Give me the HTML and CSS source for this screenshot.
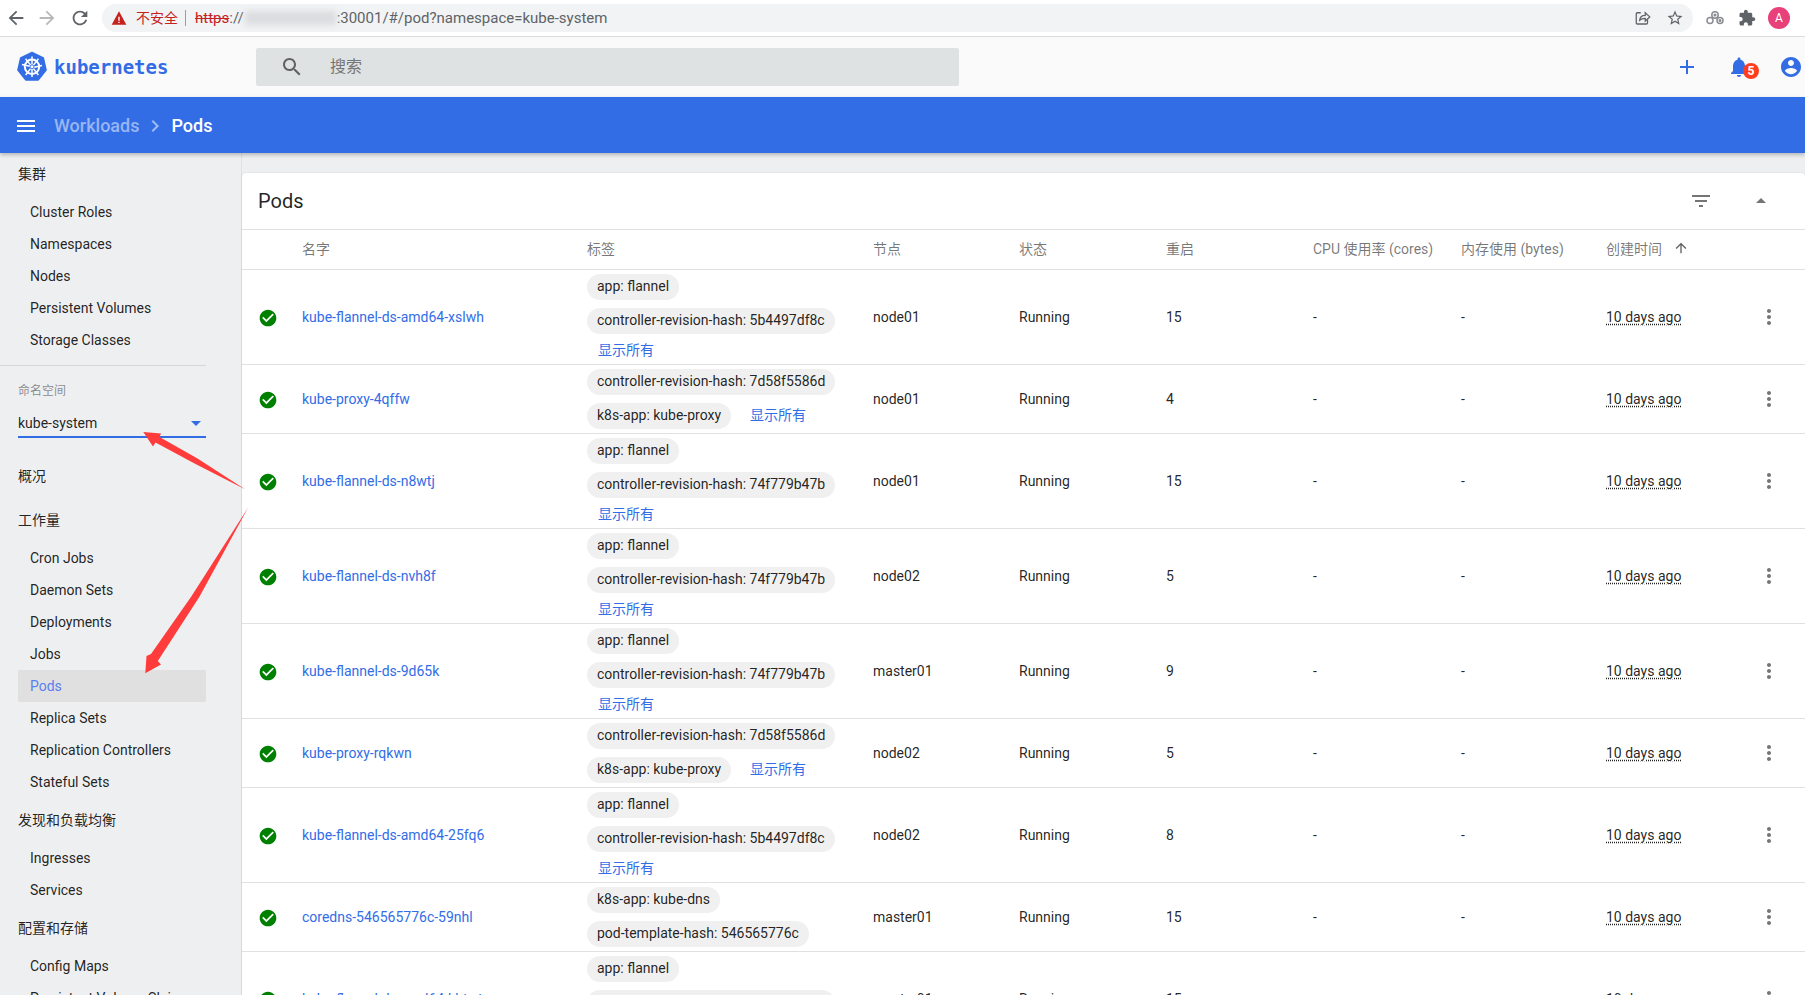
FILE: index.html
```html
<!DOCTYPE html>
<html lang="zh">
<head>
<meta charset="utf-8">
<title>Pods - Kubernetes Dashboard</title>
<link rel="stylesheet" href="styles.css">
</head>
<body>
<svg class="defs" width="0" height="0" aria-hidden="true">
  <symbol id="i-ok" viewBox="0 0 24 24"><circle cx="12" cy="12" r="6.5" fill="#fff"/><path d="M12 2C6.48 2 2 6.48 2 12s4.48 10 10 10 10-4.48 10-10S17.52 2 12 2zm-2 15l-5-5 1.41-1.41L10 14.17l7.59-7.59L19 8l-9 9z"/></symbol>
  <symbol id="i-more" viewBox="0 0 24 24"><path d="M12 8c1.1 0 2-.9 2-2s-.9-2-2-2-2 .9-2 2 .9 2 2 2zm0 2c-1.1 0-2 .9-2 2s.9 2 2 2 2-.9 2-2-.9-2-2-2zm0 6c-1.1 0-2 .9-2 2s.9 2 2 2 2-.9 2-2-.9-2-2-2z"/></symbol>
</svg>

<header class="browser">
  <svg class="b-nav" viewBox="0 0 24 24"><path d="M20 11H7.83l5.59-5.59L12 4l-8 8 8 8 1.41-1.41L7.83 13H20v-2z"/></svg>
  <svg class="b-nav b-off" viewBox="0 0 24 24"><path d="M12 4l-1.41 1.41L16.17 11H4v2h12.17l-5.58 5.59L12 20l8-8z"/></svg>
  <svg class="b-nav b-reload" viewBox="0 0 24 24"><path d="M17.65 6.35C16.2 4.9 14.21 4 12 4c-4.42 0-7.99 3.58-7.99 8s3.57 8 7.99 8c3.73 0 6.84-2.55 7.73-6h-2.08c-.82 2.33-3.04 4-5.65 4-3.31 0-6-2.69-6-6s2.69-6 6-6c1.66 0 3.14.69 4.22 1.78L13 11h7V4l-2.35 2.35z"/></svg>
  <div class="omni">
    <svg class="warn" viewBox="0 0 24 24"><path fill="#c5221f" d="M1 22h22L12 2 1 22z"/><path fill="#fff" d="M11 10h2v6h-2zM11 17.5h2v2h-2z"/></svg>
    <span class="insecure">不安全</span>
    <span class="sep"></span>
    <span class="url"><s class="scheme">https</s>://</span>
    <span class="blurred"></span>
    <span class="url">:30001/#/pod?namespace=kube-system</span>
    <span class="omni-space"></span>
    <svg class="o-ic" viewBox="0 0 24 24" fill="none" stroke="#5f6368" stroke-width="1.7"><path d="M9 5H4.5A1.5 1.5 0 0 0 3 6.500v12A1.500 1.500 0 0 0 4.500 20h12a1.500 1.500 0 0 0 1.500-1.500V14"/><path d="M7.500 15c.5-4 3.500-6.500 7.500-6.500V5l6 5.500-6 5.500v-3.500c-3 0-5.500.7-7.500 2.500z"/></svg>
    <svg class="o-ic star" viewBox="0 0 24 24"><path d="M22 9.240l-7.190-.62L12 2 9.190 8.630 2 9.240l5.460 4.730L5.820 21 12 17.270 18.180 21l-1.630-7.030L22 9.240zM12 15.400l-3.760 2.270 1-4.280-3.320-2.880 4.380-.38L12 6.100l1.710 4.040 4.380.38-3.320 2.880 1 4.280L12 15.400z"/></svg>
  </div>
  <svg class="b-ext" viewBox="0 0 20 16" fill="none" stroke="#8a8d91" stroke-width="1.500"><circle cx="5" cy="10.500" r="3"/><circle cx="10" cy="5" r="3.200"/><circle cx="15" cy="10.500" r="3"/><circle cx="10" cy="5" r=".8"/><circle cx="15" cy="10.500" r=".8"/></svg>
  <svg class="b-puzzle" viewBox="0 0 24 24"><path d="M20.500 11H19V7c0-1.100-.9-2-2-2h-4V3.500C13 2.120 11.880 1 10.500 1S8 2.120 8 3.500V5H4c-1.100 0-1.990.9-1.990 2v3.800H3.500c1.490 0 2.700 1.210 2.700 2.700s-1.210 2.700-2.700 2.700H2V20c0 1.100.9 2 2 2h3.800v-1.500c0-1.490 1.210-2.700 2.700-2.700 1.490 0 2.700 1.210 2.700 2.700V22H17c1.100 0 2-.9 2-2v-4h1.500c1.380 0 2.500-1.120 2.500-2.500S21.880 11 20.500 11z"/></svg>
  <span class="b-avatar">A</span>
</header>

<div class="toolbar">
  <div class="brand">
    <svg class="logo" viewBox="0 0 32 32">
      <path fill="#326de6" d="M16 1.500l11.300 5.400 2.800 12.200-7.800 9.800H9.700L1.900 19.100 4.700 6.900z" stroke="#326de6" stroke-width="1.500" stroke-linejoin="round"/>
      <g fill="none" stroke="#fff">
        <circle cx="16" cy="15.800" r="7.200" stroke-width="2"/>
        <path stroke-width="1.500" d="M16 5.500v8M16 18v8M6 13.600l7.800 1.700M18.200 16.300l7.800-1.700M9.600 24l5-6.400M17.400 17.600l5 6.400M9.600 7.800l5 6.300M17.400 14.100l5-6.300"/>
        <circle cx="16" cy="15.800" r="1.500" fill="#fff" stroke="none"/>
      </g>
    </svg>
    <span class="wordmark">kubernetes</span>
  </div>
  <div class="search">
    <svg class="search-ic" viewBox="0 0 24 24"><path d="M15.500 14h-.79l-.28-.27C15.410 12.590 16 11.110 16 9.500 16 5.910 13.090 3 9.500 3S3 5.910 3 9.500 5.910 16 9.500 16c1.610 0 3.090-.59 4.230-1.570l.27.28v.79l5 4.990L20.490 19l-4.990-5zm-6 0C7.010 14 5 11.990 5 9.500S7.010 5 9.500 5 14 7.010 14 9.500 11.990 14 9.500 14z"/></svg>
    <span>搜索</span>
  </div>
  <div class="tools">
    <svg class="tool add" viewBox="0 0 24 24"><path d="M19 13h-6v6h-2v-6H5v-2h6V5h2v6h6v2z"/></svg>
    <span class="bell">
      <svg class="tool" viewBox="0 0 24 24"><path d="M12 22c1.100 0 2-.9 2-2h-4c0 1.100.89 2 2 2zm6-6v-5c0-3.070-1.640-5.640-4.500-6.320V4c0-.83-.67-1.500-1.500-1.500s-1.500.67-1.500 1.500v.68C7.630 5.360 6 7.920 6 11v5l-2 2v1h16v-1l-2-2z"/></svg>
      <b class="badge">5</b>
    </span>
    <svg class="tool user" viewBox="0 0 24 24"><path d="M12 2C6.480 2 2 6.480 2 12s4.480 10 10 10 10-4.480 10-10S17.520 2 12 2zm0 3c1.660 0 3 1.340 3 3s-1.340 3-3 3-3-1.340-3-3 1.340-3 3-3zm0 14.200c-2.500 0-4.710-1.280-6-3.220.03-1.990 4-3.080 6-3.080 1.990 0 5.970 1.090 6 3.080-1.290 1.940-3.500 3.220-6 3.220z"/></svg>
  </div>
</div>

<div class="crumbs">
  <svg class="menu" viewBox="0 0 18 12"><path d="M0 0h18v2H0zM0 5h18v2H0zM0 10h18v2H0z"/></svg>
  <span class="crumb-dim">Workloads</span>
  <svg class="chev" viewBox="0 0 24 24"><path d="M10 6L8.590 7.410 13.170 12l-4.580 4.590L10 18l6-6z"/></svg>
  <span class="crumb-now">Pods</span>
</div>

<div class="body">
  <nav class="side">
    <div class="nav-title nav-first">集群</div>
    <a class="nav-item">Cluster Roles</a>
    <a class="nav-item">Namespaces</a>
    <a class="nav-item">Nodes</a>
    <a class="nav-item">Persistent Volumes</a>
    <a class="nav-item">Storage Classes</a>
    <div class="nav-rule"></div>
    <div class="ns">
      <div class="ns-label">命名空间</div>
      <div class="ns-select"><span>kube-system</span><i class="ns-caret"></i></div>
    </div>
    <div class="nav-title">概况</div>
    <div class="nav-title">工作量</div>
    <a class="nav-item">Cron Jobs</a>
    <a class="nav-item">Daemon Sets</a>
    <a class="nav-item">Deployments</a>
    <a class="nav-item">Jobs</a>
    <a class="nav-item nav-on">Pods</a>
    <a class="nav-item">Replica Sets</a>
    <a class="nav-item">Replication Controllers</a>
    <a class="nav-item">Stateful Sets</a>
    <div class="nav-title">发现和负载均衡</div>
    <a class="nav-item">Ingresses</a>
    <a class="nav-item">Services</a>
    <div class="nav-title">配置和存储</div>
    <a class="nav-item">Config Maps</a>
    <a class="nav-item">Persistent Volume Claims</a>
  </nav>

  <main class="main">
    <section class="card">
      <div class="card-head">
        <h1 class="card-title">Pods</h1>
        <svg class="head-ic filter" viewBox="0 0 24 24"><path d="M10 18h4v-2h-4v2zM3 6v2h18V6H3zm3 7h12v-2H6v2z"/></svg>
        <svg class="head-ic collapse" viewBox="0 0 24 24"><path d="M7 14l5-5 5 5z"/></svg>
      </div>
      <table class="pods">
        <colgroup>
          <col class="c-ic"><col class="c-name"><col class="c-label"><col class="c-node"><col class="c-state"><col class="c-rest"><col class="c-cpu"><col class="c-mem"><col class="c-age"><col class="c-act">
        </colgroup>
        <thead>
          <tr>
            <th></th><th>名字</th><th>标签</th><th>节点</th><th>状态</th><th>重启</th><th>CPU 使用率 (cores)</th><th>内存使用 (bytes)</th>
            <th><span class="sorted">创建时间<svg class="sort-ic" viewBox="0 0 24 24"><path d="M4 12l1.410 1.410L11 7.830V20h2V7.830l5.580 5.590L20 12l-8-8-8 8z"/></svg></span></th><th></th>
          </tr>
        </thead>
        <tbody>
          <tr>
            <td class="t-ic"><svg class="ok"><use href="#i-ok"/></svg></td>
            <td><a class="pod-link">kube-flannel-ds-amd64-xslwh</a></td>
            <td><div class="labels"><span class="chip">app: flannel</span><span class="chip">controller-revision-hash: 5b4497df8c</span><a class="show">显示所有</a></div></td>
            <td>node01</td><td>Running</td><td>15</td><td>-</td><td>-</td><td><span class="age">10 days ago</span></td>
            <td><svg class="more"><use href="#i-more"/></svg></td>
          </tr>
          <tr>
            <td class="t-ic"><svg class="ok"><use href="#i-ok"/></svg></td>
            <td><a class="pod-link">kube-proxy-4qffw</a></td>
            <td><div class="labels"><span class="chip">controller-revision-hash: 7d58f5586d</span><span class="chip">k8s-app: kube-proxy</span><a class="show">显示所有</a></div></td>
            <td>node01</td><td>Running</td><td>4</td><td>-</td><td>-</td><td><span class="age">10 days ago</span></td>
            <td><svg class="more"><use href="#i-more"/></svg></td>
          </tr>
          <tr>
            <td class="t-ic"><svg class="ok"><use href="#i-ok"/></svg></td>
            <td><a class="pod-link">kube-flannel-ds-n8wtj</a></td>
            <td><div class="labels"><span class="chip">app: flannel</span><span class="chip">controller-revision-hash: 74f779b47b</span><a class="show">显示所有</a></div></td>
            <td>node01</td><td>Running</td><td>15</td><td>-</td><td>-</td><td><span class="age">10 days ago</span></td>
            <td><svg class="more"><use href="#i-more"/></svg></td>
          </tr>
          <tr>
            <td class="t-ic"><svg class="ok"><use href="#i-ok"/></svg></td>
            <td><a class="pod-link">kube-flannel-ds-nvh8f</a></td>
            <td><div class="labels"><span class="chip">app: flannel</span><span class="chip">controller-revision-hash: 74f779b47b</span><a class="show">显示所有</a></div></td>
            <td>node02</td><td>Running</td><td>5</td><td>-</td><td>-</td><td><span class="age">10 days ago</span></td>
            <td><svg class="more"><use href="#i-more"/></svg></td>
          </tr>
          <tr>
            <td class="t-ic"><svg class="ok"><use href="#i-ok"/></svg></td>
            <td><a class="pod-link">kube-flannel-ds-9d65k</a></td>
            <td><div class="labels"><span class="chip">app: flannel</span><span class="chip">controller-revision-hash: 74f779b47b</span><a class="show">显示所有</a></div></td>
            <td>master01</td><td>Running</td><td>9</td><td>-</td><td>-</td><td><span class="age">10 days ago</span></td>
            <td><svg class="more"><use href="#i-more"/></svg></td>
          </tr>
          <tr>
            <td class="t-ic"><svg class="ok"><use href="#i-ok"/></svg></td>
            <td><a class="pod-link">kube-proxy-rqkwn</a></td>
            <td><div class="labels"><span class="chip">controller-revision-hash: 7d58f5586d</span><span class="chip">k8s-app: kube-proxy</span><a class="show">显示所有</a></div></td>
            <td>node02</td><td>Running</td><td>5</td><td>-</td><td>-</td><td><span class="age">10 days ago</span></td>
            <td><svg class="more"><use href="#i-more"/></svg></td>
          </tr>
          <tr>
            <td class="t-ic"><svg class="ok"><use href="#i-ok"/></svg></td>
            <td><a class="pod-link">kube-flannel-ds-amd64-25fq6</a></td>
            <td><div class="labels"><span class="chip">app: flannel</span><span class="chip">controller-revision-hash: 5b4497df8c</span><a class="show">显示所有</a></div></td>
            <td>node02</td><td>Running</td><td>8</td><td>-</td><td>-</td><td><span class="age">10 days ago</span></td>
            <td><svg class="more"><use href="#i-more"/></svg></td>
          </tr>
          <tr>
            <td class="t-ic"><svg class="ok"><use href="#i-ok"/></svg></td>
            <td><a class="pod-link">coredns-546565776c-59nhl</a></td>
            <td><div class="labels"><span class="chip">k8s-app: kube-dns</span><span class="chip">pod-template-hash: 546565776c</span></div></td>
            <td>master01</td><td>Running</td><td>15</td><td>-</td><td>-</td><td><span class="age">10 days ago</span></td>
            <td><svg class="more"><use href="#i-more"/></svg></td>
          </tr>
          <tr>
            <td class="t-ic"><svg class="ok"><use href="#i-ok"/></svg></td>
            <td><a class="pod-link">kube-flannel-ds-amd64-khtwt</a></td>
            <td><div class="labels"><span class="chip">app: flannel</span><span class="chip">controller-revision-hash: 5b4497df8c</span><a class="show">显示所有</a></div></td>
            <td>master01</td><td>Running</td><td>15</td><td>-</td><td>-</td><td><span class="age">10 days ago</span></td>
            <td><svg class="more"><use href="#i-more"/></svg></td>
          </tr>
        </tbody>
      </table>
    </section>
  </main>
</div>

<svg class="arrows" viewBox="0 0 1805 995" aria-hidden="true">
  <polygon points="143.300,432 161,433.500 159.500,437 197.500,458.500 245,489.300 195.500,464 155.500,442.500 153,446.500"/>
  <polygon points="145.300,673.300 161,664.500 157.800,661 199.300,597 248.300,507.300 191.300,596.500 151,654 146.500,656"/>
</svg>
</body>
</html>
```

FILE: styles.css
```css
* { box-sizing: border-box; }

html, body {
  margin: 0;
  height: 995px;
  overflow: hidden;
}

body {
  position: relative;
  display: flex;
  flex-direction: column;
  background: #eeeff1;
  color: rgba(0, 0, 0, .87);
  font: 14px/20px Roboto, "Noto Sans CJK SC", sans-serif;
}

.defs { position: absolute; }

/* browser chrome */
.browser {
  flex: none;
  display: flex;
  align-items: center;
  height: 37px;
  padding: 0 12px 1px 5px;
  background: #fff;
  border-bottom: 1px solid #dcdcdc;
}

.b-nav {
  width: 22px;
  height: 22px;
  margin-right: 9px;
  fill: #5f6368;
  flex: none;
}

.b-off { fill: #b6b8ba; }
.b-reload { margin-left: 2px; }

.omni {
  display: flex;
  align-items: center;
  width: 1591px;
  height: 28px;
  margin-left: 2px;
  padding: 0 9px;
  background: #f1f3f4;
  border-radius: 14px;
  color: #5f6368;
  font-size: 15px;
}

.warn { width: 16px; height: 16px; margin-right: 9px; flex: none; }
.insecure { color: #c5221f; font-size: 14px; width: 42px; white-space: nowrap; }
.sep { width: 1px; height: 16px; background: #9a9da1; margin: 0 9px 0 7px; flex: none; }
.url { white-space: nowrap; }
.scheme { color: #c5221f; }

.blurred {
  flex: none;
  width: 91px;
  height: 14px;
  margin: 0 1px;
  background: #dadcde;
  filter: blur(3px);
}

.omni-space { flex: 1; }
.o-ic { width: 18px; height: 18px; flex: none; }
.star { fill: #5f6368; margin-left: 14px; }

.b-ext { width: 20px; height: 16px; margin-left: 12px; flex: none; }
.b-puzzle { width: 18px; height: 18px; margin-left: 13px; fill: #5f6368; flex: none; }

.b-avatar {
  width: 22px;
  height: 22px;
  margin-left: 12px;
  border-radius: 50%;
  background: #e8407a;
  color: #fff;
  font-size: 12px;
  line-height: 22px;
  text-align: center;
  flex: none;
}

/* app toolbar */
.toolbar {
  flex: none;
  display: flex;
  align-items: center;
  height: 60px;
  background: #fafafa;
}

.brand {
  display: flex;
  align-items: center;
  width: 256px;
  padding-left: 16px;
}

.logo { width: 32px; height: 32px; flex: none; }

.wordmark {
  margin-left: 6px;
  color: #326de6;
  font: 700 19px/24px "DejaVu Sans Mono", monospace;
}

.search {
  display: flex;
  align-items: center;
  width: 703px;
  height: 38px;
  padding-left: 24px;
  background: #dfe2e3;
  border-radius: 2px;
  color: #757575;
  font-size: 16px;
}

.search-ic { width: 24px; height: 24px; margin-right: 26px; fill: #616161; }

.tools {
  flex: 1;
  display: flex;
  align-items: center;
  justify-content: flex-end;
}

.tool { display: block; width: 24px; height: 24px; fill: #326de6; }
.add { margin-right: 28px; }
.bell { position: relative; display: block; margin-right: 28px; }
.user { margin-right: 2px; }

.badge {
  position: absolute;
  left: 16px;
  top: 8px;
  width: 16px;
  height: 16px;
  border-radius: 50%;
  background: #ff3d1f;
  color: #fff;
  font-size: 12px;
  font-weight: 700;
  line-height: 16px;
  text-align: center;
}

/* breadcrumb bar */
.crumbs {
  position: relative;
  z-index: 2;
  flex: none;
  display: flex;
  align-items: center;
  height: 56px;
  padding: 2px 0 0 17px;
  background: #326de6;
  box-shadow: 0 2px 4px rgba(0, 0, 0, .24);
  font-size: 18px;
  font-weight: 500;
}

.menu { width: 18px; height: 12px; margin-right: 19px; fill: #fff; }
.crumb-dim { color: rgba(255, 255, 255, .5); }
.chev { width: 24px; height: 24px; margin: 0 4px; fill: rgba(255, 255, 255, .55); }
.crumb-now { color: #fff; }

/* layout */
.body {
  flex: 1;
  display: flex;
  min-height: 0;
}

.side {
  flex: none;
  width: 242px;
  border-right: 1px solid #e0e0e0;
  padding: 0 35px 0 18px;
}

.nav-title {
  height: 44px;
  line-height: 44px;
  color: rgba(0, 0, 0, .87);
}

.nav-first { height: 43px; line-height: 43px; }

.nav-item {
  display: block;
  height: 32px;
  padding-left: 12px;
  line-height: 32px;
  border-radius: 2px;
  color: rgba(0, 0, 0, .87);
  white-space: nowrap;
}

.nav-on { background: #e0e0e0; color: #5a7fee; }

.nav-rule {
  height: 1px;
  margin: 9px 0 0 -18px;
  background: #d5d6d8;
}

.ns { height: 88px; padding-top: 16px; }
.ns-label { font-size: 12px; line-height: 18px; color: rgba(0, 0, 0, .45); }

.ns-select {
  display: flex;
  align-items: center;
  justify-content: space-between;
  height: 38px;
  padding: 10px 5px 0 0;
  border-bottom: 2px solid #326de6;
}

.ns-caret {
  width: 0;
  height: 0;
  border: 5px solid transparent;
  border-top-color: #326de6;
  border-bottom: 0;
}

.main {
  flex: 1;
  min-width: 0;
  padding-top: 20px;
}

.card {
  background: #fff;
  border-radius: 4px 4px 0 0;
  box-shadow: 0 0 2px rgba(0, 0, 0, .12);
}

.card-head {
  display: flex;
  align-items: center;
  height: 57px;
  padding-left: 16px;
  border-bottom: 1px solid #e0e0e0;
}

.card-title {
  flex: 1;
  margin: 0;
  font-size: 20px;
  font-weight: 400;
  line-height: 56px;
}

.head-ic { width: 24px; height: 24px; fill: #757575; }
.filter { margin-right: 36px; }
.collapse { margin-right: 32px; }

/* table */
.pods {
  width: 1563px;
  table-layout: fixed;
  border-collapse: separate;
  border-spacing: 0;
}

.c-ic { width: 60px; }
.c-name { width: 285px; }
.c-label { width: 286px; }
.c-node { width: 146px; }
.c-state { width: 147px; }
.c-rest { width: 147px; }
.c-cpu { width: 148px; }
.c-mem { width: 145px; }
.c-age { width: 151px; }
.c-act { width: 48px; }

.pods th {
  height: 40px;
  padding: 0 0 1px;
  border-bottom: 1px solid #e0e0e0;
  color: rgba(0, 0, 0, .54);
  font-size: 14px;
  font-weight: 400;
  text-align: left;
  white-space: nowrap;
}

.pods td {
  padding: 0;
  border-bottom: 1px solid #e0e0e0;
  vertical-align: middle;
  white-space: nowrap;
}

.sorted { display: inline-flex; align-items: center; }
.sort-ic { width: 16px; height: 16px; margin: -3px 0 0 11px; fill: #616161; }

.pods .t-ic { padding: 1px 0 0 16px; }
.ok { display: block; width: 20px; height: 20px; fill: #008000; }
.more { display: block; width: 24px; height: 24px; fill: #757575; }

.pod-link { color: #326de6; }
.age { text-decoration: underline dotted; text-underline-offset: 2px; }

.labels { display: flex; flex-wrap: wrap; align-items: center; }

.chip {
  height: 26px;
  margin: 4px 8px 4px 0;
  padding: 0 10px;
  border-radius: 13px;
  background: #f0f0f0;
  line-height: 25px;
}

.show {
  height: 26px;
  padding: 0 10px 0 11px;
  color: #326de6;
  font-size: 14px;
  line-height: 24px;
}

/* annotation arrows drawn over the screenshot */
.arrows {
  position: absolute;
  left: 0;
  top: 0;
  z-index: 5;
  width: 1805px;
  height: 995px;
  fill: #ff3b3b;
  pointer-events: none;
}
```
